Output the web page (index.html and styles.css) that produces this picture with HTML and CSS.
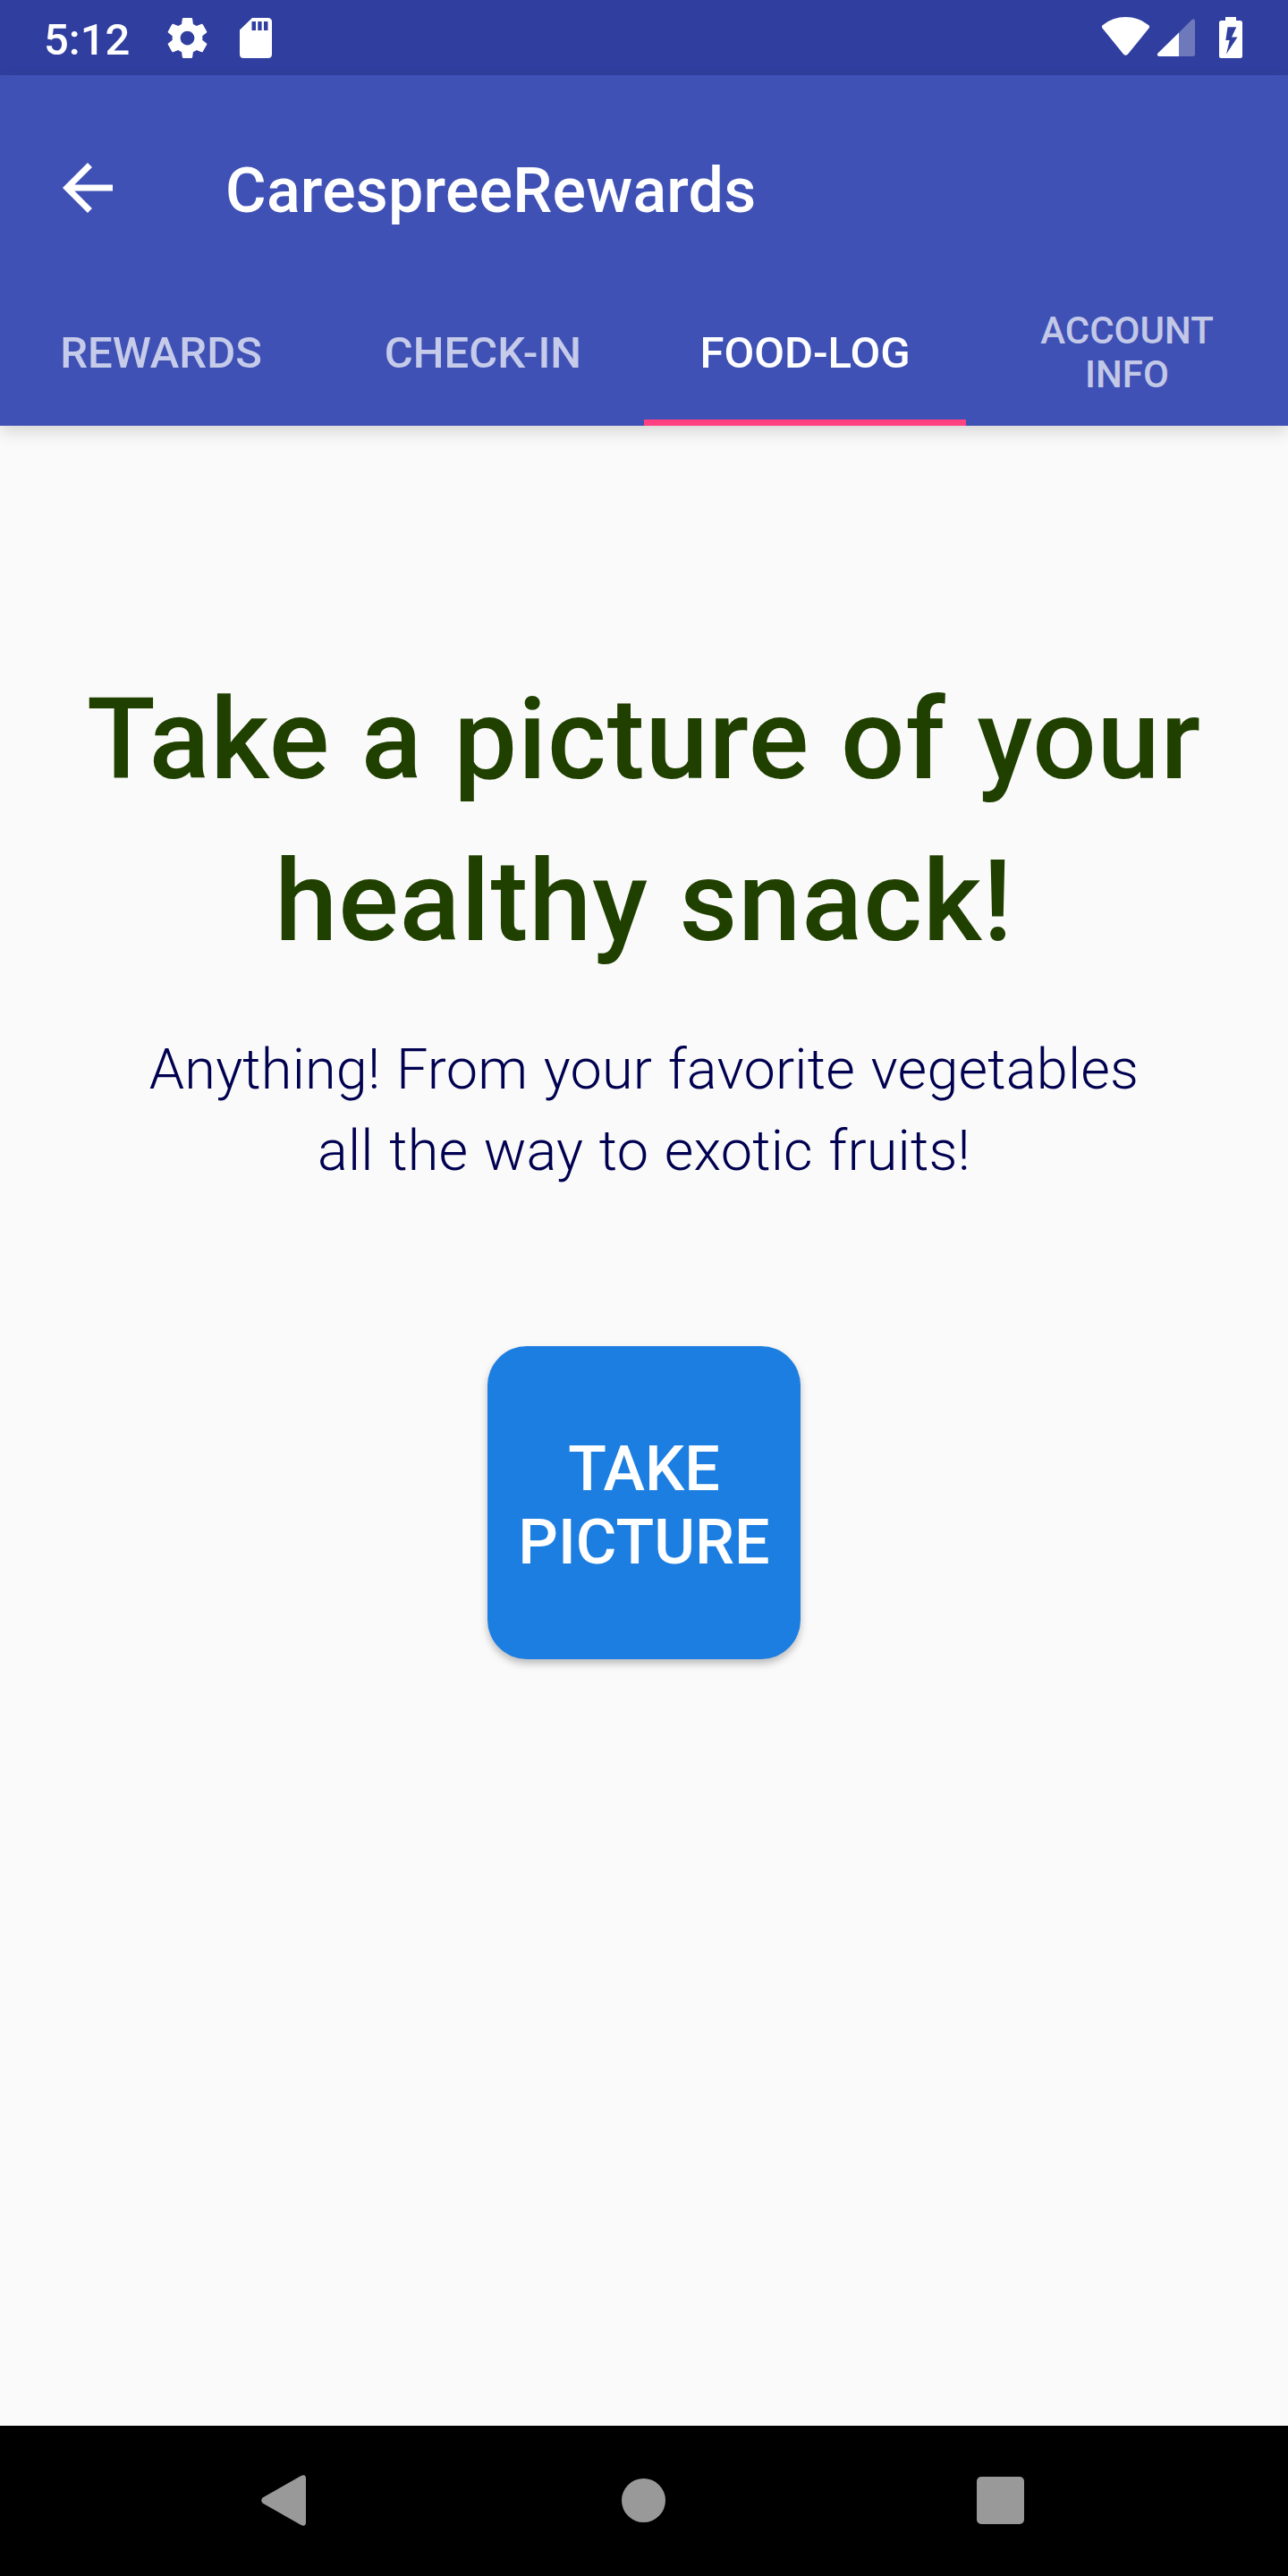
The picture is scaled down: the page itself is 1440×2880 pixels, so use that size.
FILE: index.html
```html
<!DOCTYPE html>
<html lang="en">
<head>
  <meta charset="utf-8">
  <title>CarespreeRewards</title>
  <link rel="stylesheet" href="styles.css">
</head>
<body>
  <div class="status-bar">
    <span class="clock">5:12</span>
    <svg class="icon-settings" viewBox="2 2 20 20">
      <path d="M19.43 12.98c.04-.32.07-.64.07-.98s-.03-.66-.07-.98l2.11-1.65c.19-.15.24-.42.12-.64l-2-3.46c-.12-.22-.39-.3-.61-.22l-2.49 1c-.52-.4-1.08-.73-1.69-.98l-.38-2.65C14.46 2.18 14.25 2 14 2h-4c-.25 0-.46.18-.49.42l-.38 2.65c-.61.25-1.17.59-1.69.98l-2.49-1c-.23-.09-.49 0-.61.22l-2 3.46c-.13.22-.07.49.12.64l2.11 1.65c-.04.32-.07.65-.07.98s.03.66.07.98l-2.11 1.65c-.19.15-.24.42-.12.64l2 3.46c.12.22.39.3.61.22l2.49-1c.52.4 1.08.73 1.69.98l.38 2.65c.03.24.24.42.49.42h4c.25 0 .46-.18.49-.42l.38-2.65c.61-.25 1.17-.59 1.69-.98l2.49 1c.23.09.49 0 .61-.22l2-3.46c.12-.22.07-.49-.12-.64l-2.11-1.65zM12 15.5c-1.93 0-3.5-1.57-3.5-3.5s1.57-3.5 3.5-3.5 3.5 1.57 3.5 3.5-1.57 3.5-3.5 3.5z"/>
    </svg>
    <svg class="icon-sd" viewBox="0 0 36 45">
      <path fill-rule="evenodd" d="M14 0H31.500Q36 0 36 4.500V40.500Q36 45 31.500 45H4.500Q0 45 0 40.500V13.500ZM13.500 4V14H18V4ZM20.300 4V14H24.600V4ZM27 4V14H31.500V4Z"/>
    </svg>
    <div class="system-icons">
      <svg class="icon-wifi" viewBox="0 0 53 43">
        <path d="M1 9Q12 0 26.500 0T52 9Q54 10.500 52.300 12.800L29 41.500Q26.500 44 24 41.500L.7 12.800Q-1 10.500 1 9Z"/>
      </svg>
      <svg class="icon-signal" viewBox="0 0 42 42">
        <path class="faded" d="M24 15.500L38.500 1Q42 -1 42 3V39.500Q42 42 39.500 42H24Z"/>
        <path d="M24 15.500V42H3Q-1.500 42 .5 38.500Z"/>
      </svg>
      <svg class="icon-battery" viewBox="0 0 26 46">
        <path fill-rule="evenodd" d="M7 0H19V4H23.500Q26 4 26 6.500V43.500Q26 46 23.500 46H2.500Q0 46 0 43.500V6.500Q0 4 2.500 4H7ZM9.500 11.300L7.300 26H11.700L8 41.500L20.500 22.500H14L19.300 11.300Z"/>
      </svg>
    </div>
  </div>

  <header class="app-bar">
    <div class="toolbar">
      <svg class="icon-back" viewBox="0 0 24 24">
        <path d="M20 11H7.830l5.590-5.590L12 4l-8 8 8 8 1.410-1.410L7.830 13H20v-2z"/>
      </svg>
      <h1 class="title">CarespreeRewards</h1>
    </div>
    <nav class="tabs">
      <a class="tab">Rewards</a>
      <a class="tab">Check-in</a>
      <a class="tab active">Food-log</a>
      <a class="tab small">Account<br>Info</a>
    </nav>
  </header>

  <main class="content">
    <h2 class="headline">Take a picture of your<br>healthy snack!</h2>
    <p class="subtitle">Anything! From your favorite vegetables<br>all the way to exotic fruits!</p>
    <button class="take-picture">Take Picture</button>
  </main>

  <footer class="nav-bar">
    <svg class="nav-back" viewBox="0 0 50 57">
      <path d="M1.500 25.500L44.500 1Q50 -1.500 50 4V53Q50 58.500 44.500 56L1.500 31.500Q-1 28.500 1.500 25.500Z"/>
    </svg>
    <span class="nav-home"></span>
    <span class="nav-recent"></span>
  </footer>
</body>
</html>
```

FILE: styles.css
```css
* {
  box-sizing: border-box;
}

body {
  margin: 0;
  height: 2880px;
  display: flex;
  flex-direction: column;
  background: #fafafa;
  font-family: Roboto, sans-serif;
}

svg {
  display: block;
  flex: none;
  fill: #fff;
}

/* status bar */
.status-bar {
  height: 84px;
  display: flex;
  align-items: center;
  padding: 0 51px 0 49px;
  background: #303f9f;
  color: #fff;
}

.clock {
  width: 138px;
  font-size: 49px;
  font-weight: 500;
  line-height: 57px;
  padding-top: 4px;
}

.icon-settings {
  width: 45px;
  height: 45px;
}

.icon-sd {
  width: 36px;
  height: 45px;
  margin-left: 36px;
}

.system-icons {
  display: flex;
  align-items: center;
  margin-left: auto;
}

.icon-wifi {
  width: 53px;
  height: 43px;
  margin: 0 9px 3px 0;
}

.icon-signal {
  width: 42px;
  height: 42px;
  margin-right: 27px;
}

.icon-signal .faded {
  opacity: 0.3;
}

.icon-battery {
  width: 26px;
  height: 46px;
}

/* app bar */
.app-bar {
  height: 392px;
  padding-top: 28px;
  background: #3f51b5;
  color: #fff;
  box-shadow: 0 7px 17px rgba(0, 0, 0, 0.14);
}

.toolbar {
  height: 196px;
  display: flex;
  align-items: center;
  padding-left: 56px;
}

.icon-back {
  width: 84px;
  height: 84px;
}

.title {
  margin: 0 0 0 112px;
  padding-top: 6px;
  font-size: 70px;
  font-weight: 500;
  line-height: 82px;
  letter-spacing: 0.2px;
}

.tabs {
  height: 168px;
  display: grid;
  grid-template-columns: repeat(4, 1fr);
}

.tab {
  display: flex;
  align-items: center;
  justify-content: center;
  border-bottom: 7px solid transparent;
  padding-top: 11px;
  font-size: 49px;
  font-weight: 500;
  line-height: 57px;
  text-align: center;
  text-transform: uppercase;
  color: rgba(255, 255, 255, 0.7);
}

.tab.active {
  color: #fff;
  border-bottom-color: #ff4081;
}

.tab.small {
  font-size: 42px;
  line-height: 49px;
}

/* content */
.content {
  flex: 1;
  display: flex;
  flex-direction: column;
  align-items: center;
  padding-top: 261px;
  text-align: center;
}

.headline {
  margin: 0;
  font-size: 126px;
  font-weight: 500;
  line-height: 181px;
  letter-spacing: 0.9px;
  word-spacing: 2.5px;
  white-space: nowrap;
  color: #204000;
}

.subtitle {
  margin: 51px 0 0;
  font-size: 63px;
  font-weight: 300;
  line-height: 91px;
  letter-spacing: 0.2px;
  word-spacing: 2px;
  white-space: nowrap;
  color: #000050;
}

.take-picture {
  width: 350px;
  height: 350px;
  margin-top: 173px;
  padding: 6px 28px 0;
  border: 0;
  border-radius: 44px;
  background: #1d7ee1;
  box-shadow: 0 5px 9px rgba(0, 0, 0, 0.25);
  font-family: inherit;
  font-size: 70px;
  font-weight: 500;
  line-height: 82px;
  text-transform: uppercase;
  color: #fff;
}

/* system navigation */
.nav-bar {
  height: 168px;
  display: flex;
  align-items: center;
  padding: 0 0 1px 292px;
  background: #000;
}

.nav-back {
  width: 50px;
  height: 57px;
  fill: #999;
}

.nav-home {
  width: 49px;
  height: 49px;
  margin-left: 353px;
  border-radius: 50%;
  background: #999;
}

.nav-recent {
  width: 53px;
  height: 53px;
  margin-left: 348px;
  border-radius: 5px;
  background: #999;
}
```
